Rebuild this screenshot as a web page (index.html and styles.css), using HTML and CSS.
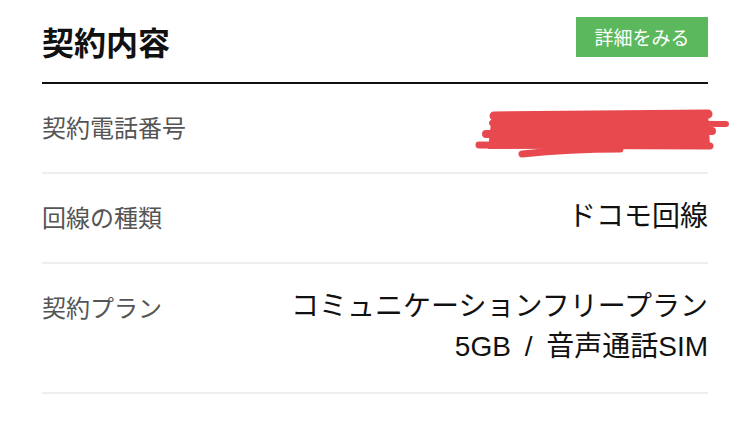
FILE: index.html
```html
<!DOCTYPE html>
<html lang="ja">
<head>
<meta charset="utf-8">
<link rel="stylesheet" href="styles.css">
</head>
<body>
<div class="page">
  <div class="header">
    <h1 class="title">契約内容</h1>
    <a class="detail-btn">詳細をみる</a>
  </div>
  <div class="row">
    <div class="label">契約電話番号</div>
    <div class="value redacted">
      <span class="hidden-num">090-0000-0000</span>
      <svg class="scribble" width="265" height="60" viewBox="0 0 265 60">
        <circle cx="42" cy="14" r="3" fill="#333"/>
        <circle cx="243" cy="28" r="2" fill="#333"/>
        <polygon points="22,12 238,11 240,44 18,47" fill="#e8494f"/>
        <g stroke="#e8494f" stroke-linecap="round" fill="none">
          <path d="M24 14 L238 12" stroke-width="9"/>
          <path d="M22 21 L256 22" stroke-width="6"/>
          <path d="M16 32 L242 29" stroke-width="8"/>
          <path d="M9 43 L240 44" stroke-width="7"/>
          <path d="M52 52 Q100 47 150 47" stroke-width="7"/>
        </g>
      </svg>
    </div>
  </div>
  <div class="row">
    <div class="label">回線の種類</div>
    <div class="value">ドコモ回線</div>
  </div>
  <div class="row">
    <div class="label">契約プラン</div>
    <div class="value">コミュニケーションフリープラン<br><span class="spaced">5GB / 音声通話SIM</span></div>
  </div>
</div>
</body>
</html>
```

FILE: styles.css
```css
html, body {
  margin: 0;
  padding: 0;
  background: #fff;
}
body {
  font-family: "Liberation Sans", "Noto Sans CJK JP", sans-serif;
  color: #111;
}
.page {
  width: 666px;
  margin-left: 42px;
}
.header {
  height: 82px;
  display: flex;
  justify-content: space-between;
  align-items: flex-start;
  border-bottom: 2px solid #111;
}
.title {
  margin: 21px 0 0 0;
  font-size: 32px;
  line-height: 40px;
  font-weight: bold;
  font-family: "Noto Sans CJK JP", sans-serif;
}
.detail-btn {
  margin-top: 17px;
  width: 132px;
  height: 40px;
  background: #5cb85c;
  color: #fff;
  font-size: 19px;
  line-height: 40px;
  text-align: center;
  font-family: "Noto Sans CJK JP", sans-serif;
}
.row {
  display: flex;
  justify-content: space-between;
  align-items: flex-start;
  padding: 23px 0 25px 0;
  border-bottom: 2px solid #eeeef0;
}
.label {
  font-size: 24px;
  line-height: 40px;
  color: #555;
  font-family: "Noto Sans CJK JP", sans-serif;
}
.value {
  font-size: 28px;
  line-height: 40px;
  text-align: right;
  color: #111;
}
.spaced {
  word-spacing: 6px;
}
.redacted {
  position: relative;
  width: 230px;
  height: 40px;
}
.hidden-num {
  visibility: hidden;
}
.scribble {
  position: absolute;
  left: -8px;
  top: -5px;
}
```
